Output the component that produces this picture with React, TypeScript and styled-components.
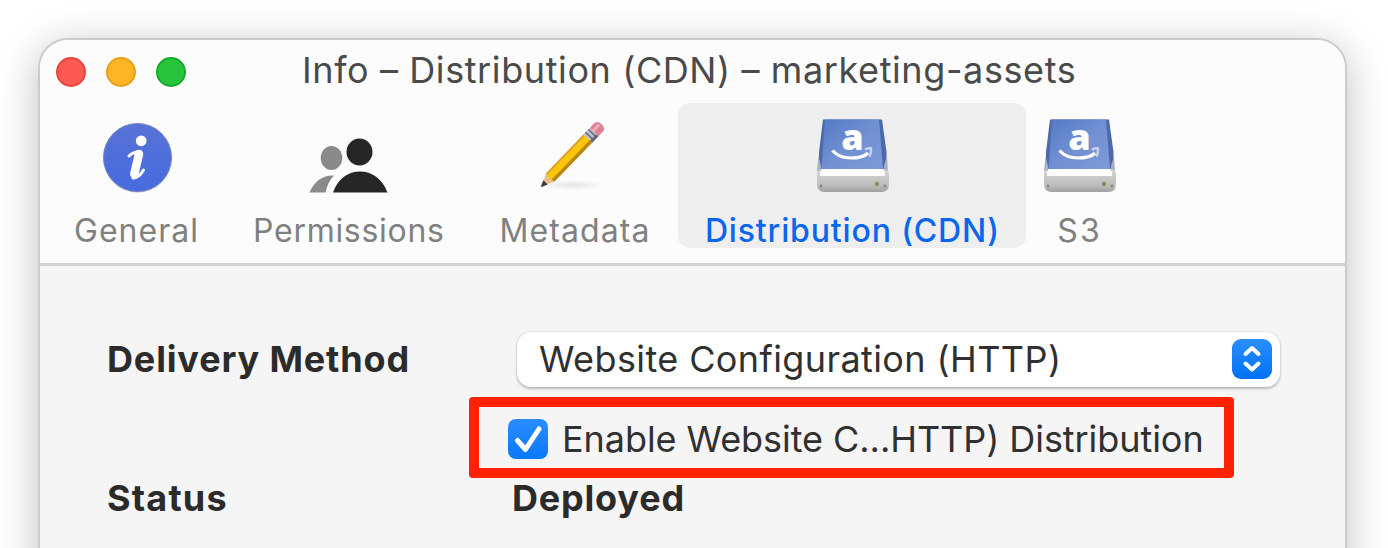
import React from "react";
import styled, { createGlobalStyle } from "styled-components";

const GlobalStyle = createGlobalStyle`
  * { box-sizing: border-box; }
  body {
    margin: 0;
    background: #fff;
    overflow: hidden;
    font-family: Inter, "Liberation Sans", sans-serif;
  }
`;

const Desktop = styled.div`
  height: 548px;
  padding: 38px 41px 0 38px;
  overflow: hidden;
`;

const Window = styled.div`
  height: 620px;
  border: 2px solid #cbcbcb;
  border-radius: 30px;
  background: #f5f5f5;
  overflow: hidden;
  box-shadow: 0 8px 40px rgba(0, 0, 0, 0.25);
`;

const Header = styled.header`
  background: #fcfcfc;
  border-bottom: 3px solid #d2d2d2;
  height: 226px;
`;

const TitleBar = styled.div`
  display: flex;
  align-items: center;
  height: 63px;
  padding-left: 16px;
`;

const Lights = styled.div`
  display: flex;
  gap: 20px;
`;

const Light = styled.span<{ $fill: string; $edge: string }>`
  width: 30px;
  height: 30px;
  border-radius: 50%;
  background: ${(p) => p.$fill};
  border: 2px solid ${(p) => p.$edge};
`;

const Title = styled.h1`
  margin: 0 0 3px 116px;
  font-size: 36px;
  font-weight: 400;
  line-height: 44px;
  letter-spacing: 0.6px;
  color: #4a4a4a;
  white-space: nowrap;
`;

const TabBar = styled.nav`
  display: flex;
  gap: 2px;
  padding-left: 8px;
`;

const Tab = styled.div<{ $width: number; $active?: boolean }>`
  display: flex;
  flex-direction: column;
  align-items: center;
  gap: 18px;
  width: ${(p) => p.$width}px;
  height: 145px;
  padding-top: 13px;
  border-radius: 12px;
  background: ${(p) => (p.$active ? "#eeeeee" : "transparent")};
  color: ${(p) => (p.$active ? "#0b66ee" : "#808080")};
  font-weight: ${(p) => (p.$active ? 500 : 400)};
`;

const TabLabel = styled.span<{ $spacing: number }>`
  font-size: 32px;
  line-height: 34px;
  letter-spacing: ${(p) => p.$spacing}px;
  margin-right: -${(p) => p.$spacing}px;
  white-space: nowrap;
`;

const Icon = styled.svg`
  display: block;
  width: 80px;
  height: 80px;
  flex: none;
  overflow: visible;
`;

const Form = styled.main`
  display: grid;
  grid-template-columns: 362px 811px;
  grid-template-rows: 55px 10px 81px 41px;
  align-items: center;
  padding: 66px 0 0 67px;
`;

const FormGap = styled.div`
  grid-column: 1 / -1;
`;

const Label = styled.span<{ $spacing: number }>`
  padding-bottom: 1px;
  font-size: 36px;
  font-weight: 700;
  line-height: 42px;
  letter-spacing: ${(p) => p.$spacing}px;
  color: #2b2b2b;
`;

const Value = styled(Label)`
  margin-left: 43px;
`;

const HighlightCell = styled.div`
  grid-column: 2;
`;

const Select = styled.div`
  display: flex;
  align-items: center;
  justify-content: space-between;
  height: 55px;
  margin-left: 48px;
  padding: 0 8px 1px 22px;
  border-radius: 14px;
  background: #fff;
  box-shadow: 0 0 2px rgba(0, 0, 0, 0.2), 0 2px 3px rgba(0, 0, 0, 0.22);
`;

const FieldText = styled.span<{ $spacing: number }>`
  font-size: 36px;
  line-height: 44px;
  letter-spacing: ${(p) => p.$spacing}px;
  color: #303030;
  white-space: nowrap;
`;

const Stepper = styled.span`
  display: flex;
  width: 40px;
  height: 40px;
  border-radius: 9px;
  background: linear-gradient(#2a90ff, #0070f5);
`;

const Highlight = styled.div`
  display: flex;
  align-items: center;
  gap: 14px;
  width: 765px;
  height: 81px;
  padding: 2px 0 0 29px;
  border: 10px solid #ff2102;
  border-radius: 4px;
`;

const Check = styled.span`
  display: flex;
  width: 40px;
  height: 40px;
  border-radius: 8px;
  background: linear-gradient(#2a8dff, #0a78fb);
`;

const Stroke = styled.svg`
  width: 40px;
  height: 40px;
  fill: none;
  stroke: #fff;
  stroke-linecap: round;
  stroke-linejoin: round;
`;

function InfoIcon() {
  return (
    <Icon viewBox="0 0 80 80">
      <defs>
        <linearGradient id="info" x1="0" y1="0" x2="0" y2="1">
          <stop offset="0" stopColor="#5872d6" />
          <stop offset="1" stopColor="#476be0" />
        </linearGradient>
      </defs>
      <circle cx="41.5" cy="42.7" r="34" fill="#c9c9c9" />
      <circle cx="41.5" cy="41.5" r="34" fill="url(#info)" stroke="#7183c4" strokeWidth="1" />
      <circle cx="45.2" cy="24.8" r="5.4" fill="#fff" />
      <g fill="none" stroke="#fff" strokeLinecap="round" strokeLinejoin="round">
        <path d="M43 38 38.3 58" strokeWidth="8.5" />
        <path d="M33 40q4-4 11-4.500M37 62q6 0 10.500-8" strokeWidth="3" />
      </g>
    </Icon>
  );
}

function PeopleIcon() {
  return (
    <Icon viewBox="1 0 80 80">
      <ellipse cx="23.5" cy="42" rx="10.8" ry="12" fill="#8a8a8a" />
      <path d="M1.5 76.5Q9 59 26 59.5q-6 6-8.5 17z" fill="#8a8a8a" />
      <ellipse cx="51.5" cy="36" rx="13" ry="13.5" fill="#262626" />
      <path d="M25 76.500C30 62.500 40 55.500 52 55.500S74 62.500 79.500 76.500z" fill="#262626" />
    </Icon>
  );
}

function PencilIcon() {
  return (
    <Icon viewBox="0 0 80 80">
      <defs>
        <radialGradient id="ground">
          <stop offset="0" stopColor="#000" stopOpacity="0.1" />
          <stop offset="1" stopColor="#000" stopOpacity="0" />
        </radialGradient>
      </defs>
      <ellipse cx="38" cy="69" rx="32" ry="5" fill="url(#ground)" />
      <g transform="translate(7 70) rotate(-46)">
        <path d="M0 0 12-6V6z" fill="#e8bd8c" />
        <path d="M-1-.5 5-3V3L-1 .5z" fill="#3b3b42" />
        <path d="M12-6H66V-2H11z" fill="#dda021" />
        <path d="M11-4H66V3H11z" fill="#fbc70c" />
        <path d="M11 2.500H66V6H12z" fill="#bd860d" />
        <path d="M66-6h9v12h-9z" fill="#c3c5cf" />
        <path d="M68-6h1.800v12h-1.800zM72-6h1.800v12h-1.800z" fill="#70778c" />
        <path d="M66 3h9v3h-9z" fill="#646778" />
        <path d="M75-6h6q5 0 5 6t-5 6h-6z" fill="#dc8397" />
        <path d="M75-3h9v3h-9z" fill="#efadb9" />
      </g>
    </Icon>
  );
}

function DriveIcon({ id }: { id: string }) {
  return (
    <Icon viewBox="0 0 80 80">
      <defs>
        <linearGradient id={`${id}-top`} x1="0" y1="0" x2="1" y2="1">
          <stop offset="0" stopColor="#5479c3" />
          <stop offset="0.5" stopColor="#7190d2" />
          <stop offset="1" stopColor="#7e9ad7" />
        </linearGradient>
        <linearGradient id={`${id}-base`} x1="0" y1="0" x2="0" y2="1">
          <stop offset="0" stopColor="#d6d6d6" />
          <stop offset="0.7" stopColor="#bdbdbd" />
          <stop offset="1" stopColor="#a0a0a0" />
        </linearGradient>
      </defs>
      <path d="M11 3.500H70L74.500 36V53H7V36z" fill="#4c69ac" />
      <path d="M6.500 40 9 50V55H5zM75 40 72 50V55H76z" fill="#a7b0c5" />
      <path d="M13 3.500H67L71 53H9.500z" fill={`url(#${id}-top)`} />
      <path d="M9 53H72L73 61H8z" fill="#fff" />
      <path d="M8 53.500Q5 54 5 59v9q0 8 8 8H69q8 0 8-8V59q0-5-4-5.500V60H8z" fill={`url(#${id}-base)`} />
      <circle cx="65" cy="68" r="2.200" fill="#8b8c5c" />
      <circle cx="9" cy="70" r="1.400" fill="#858585" />
      <circle cx="73" cy="70" r="1.400" fill="#858585" />
      <text x="40.500" y="33.500" textAnchor="middle" fontFamily="Open Sans, sans-serif" fontSize="36" fontWeight="800" fill="#fff">
        a
      </text>
      <path d="M20.500 34.500Q27 42 39 42T56 37" fill="none" stroke="#fff" strokeWidth="3.200" />
      <path d="M53 33.500q7-3 6 0 0 5-2 7" fill="none" stroke="#c5d2f0" strokeWidth="2.500" />
    </Icon>
  );
}

export default function App() {
  return (
    <>
      <GlobalStyle />
      <Desktop>
        <Window>
          <Header>
            <TitleBar>
              <Lights>
                <Light $fill="#ff5a52" $edge="#e8443f" />
                <Light $fill="#fdb525" $edge="#e5a01c" />
                <Light $fill="#28c43c" $edge="#17ab2a" />
              </Lights>
              <Title>Info – Distribution (CDN) – marketing-assets</Title>
            </TitleBar>
            <TabBar>
              <Tab $width={176}>
                <InfoIcon />
                <TabLabel $spacing={1}>General</TabLabel>
              </Tab>
              <Tab $width={245}>
                <PeopleIcon />
                <TabLabel $spacing={0.7}>Permissions</TabLabel>
              </Tab>
              <Tab $width={203}>
                <PencilIcon />
                <TabLabel $spacing={1.1}>Metadata</TabLabel>
              </Tab>
              <Tab $width={348} $active>
                <DriveIcon id="cdn" />
                <TabLabel $spacing={0.85}>Distribution (CDN)</TabLabel>
              </Tab>
              <Tab $width={101}>
                <DriveIcon id="s3" />
                <TabLabel $spacing={2}>S3</TabLabel>
              </Tab>
            </TabBar>
          </Header>
          <Form>
            <Label $spacing={0.85}>Delivery Method</Label>
            <Select>
              <FieldText $spacing={0.4}>Website Configuration (HTTP)</FieldText>
              <Stepper>
                <Stroke viewBox="0 0 40 40" strokeWidth="4">
                  <path d="M13.5 15 20 9 26.5 15M13.5 24.5 20 30.5 26.5 24.5" />
                </Stroke>
              </Stepper>
            </Select>
            <FormGap />
            <HighlightCell>
              <Highlight>
                <Check>
                  <Stroke viewBox="0 0 40 40" strokeWidth="5">
                    <path d="M9.5 21.5 17.5 30.5 31 10" />
                  </Stroke>
                </Check>
                <FieldText $spacing={-0.06}>Enable Website C...HTTP) Distribution</FieldText>
              </Highlight>
            </HighlightCell>
            <Label $spacing={1.2}>Status</Label>
            <Value $spacing={0.8}>Deployed</Value>
          </Form>
        </Window>
      </Desktop>
    </>
  );
}
